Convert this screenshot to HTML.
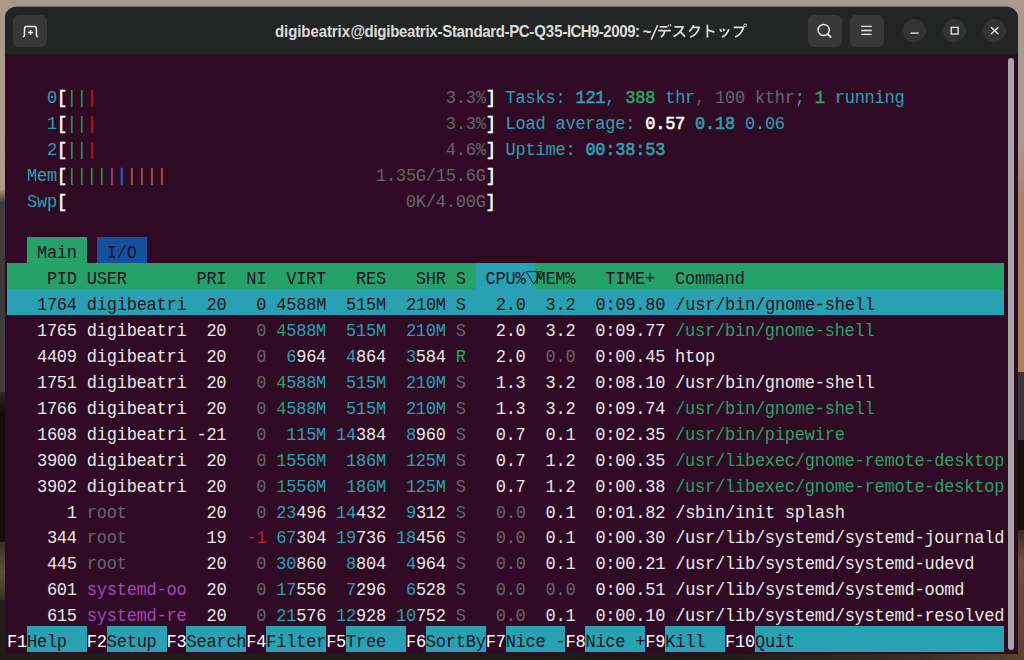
<!DOCTYPE html>
<html><head><meta charset="utf-8">
<style>
html,body{margin:0;padding:0}
body{width:1024px;height:660px;overflow:hidden;position:relative;background:#a89a8e}
.o{position:absolute}
.win{position:absolute;left:5px;top:7px;width:1013px;height:647px;border-radius:12px 12px 0 0;background:#300a24;overflow:hidden;box-shadow:0 0 0 0.6px rgba(0,0,0,0.6)}
.tb{position:absolute;left:0;top:0;width:1013px;height:48px;background:#232524;box-shadow:inset 0 -1px 0 #1b1a1b}
.btn{position:absolute;top:8px;width:33.5px;height:32px;border-radius:6px;background:#383838}
.cb{position:absolute;top:12.2px;width:23px;height:23px;border-radius:50%;background:#333333}
.title{position:absolute;top:17.3px;line-height:15px;font-family:"Liberation Sans",sans-serif;font-weight:bold;font-size:15px;color:#dcdcdc;white-space:pre;transform:scaleY(1.07);transform-origin:0 12.7px}
.sb{position:absolute;left:1003px;top:51px;width:6px;height:592px;border-radius:3px;background:#a6a6a6}
.b{position:absolute}
.t{position:absolute;left:7.0px;height:25.92px;line-height:25.92px;padding-top:4.1px;box-sizing:border-box;white-space:pre;
 font-family:"Liberation Mono",monospace;font-size:17.0px;letter-spacing:-0.2317px;color:#e8e8e8;transform:scaleY(1.06);transform-origin:0 21.58px}
.B{-webkit-text-stroke:0.55px currentColor}
</style></head><body>
<div class="win">
 <div class="tb">
  <div class="btn" style="left:8px"><svg width="34" height="32" viewBox="0 0 34 32"><path d="M9.8 21.5 H10.3 Q11.5 21.5 11.5 20.3 V13.5 Q11.5 11.5 13.5 11.5 H21.4 Q23.4 11.5 23.4 13.5 V20.3 Q23.4 21.5 24.6 21.5 H25.1" fill="none" stroke="#ececec" stroke-width="1.5"/><path d="M17.5 15 V20 M15 17.5 H20" stroke="#ececec" stroke-width="1.5"/></svg></div>
  <div class="title" style="left:270.00px;letter-spacing:-0.08px">digibeatrix</div><div class="title" style="left:345.40px;letter-spacing:-0.04px">@</div><div class="title" style="left:359.60px;letter-spacing:-0.28px">digibeatrix</div><div class="title" style="left:432.55px;letter-spacing:-0.33px">-Standard</div><div class="title" style="left:499.55px;letter-spacing:-0.41px">-PC</div><div class="title" style="left:524.15px;letter-spacing:0.0px">-Q35</div><div class="title" style="left:557.55px;letter-spacing:-0.59px">-ICH9</div><div class="title" style="left:593.75px;letter-spacing:-0.4px">-2009:</div><div class="title" style="left:637.8px">~</div>
  <div class="btn" style="left:803px"><svg width="34" height="32" viewBox="0 0 34 32"><circle cx="15.7" cy="15" r="5.6" fill="none" stroke="#e6e6e6" stroke-width="1.5"/><path d="M19.8 19.2 L22.6 22" stroke="#e6e6e6" stroke-width="1.9" stroke-linecap="round"/></svg></div>
  <div class="btn" style="left:845px"><svg width="34" height="32" viewBox="0 0 34 32"><path d="M11.7 11.4 H21.3 M11.7 15.5 H21.3 M11.7 19.3 H21.3" stroke="#e6e6e6" stroke-width="1.3" stroke-linecap="round"/></svg></div>
  <div class="cb" style="left:897.5px"><svg width="23" height="23" viewBox="0 0 23 23"><path d="M7.6 14.2 H15.8" stroke="#f0f0f0" stroke-width="1.3"/></svg></div>
  <div class="cb" style="left:937.5px"><svg width="23" height="23" viewBox="0 0 23 23"><rect x="8.2" y="8.4" width="6.9" height="6.6" fill="none" stroke="#f0f0f0" stroke-width="1.3"/></svg></div>
  <div class="cb" style="left:977.5px"><svg width="23" height="23" viewBox="0 0 23 23"><path d="M8 8.3 L15.3 15 M15.3 8.3 L8 15" stroke="#f0f0f0" stroke-width="1.4"/></svg></div>
 </div>
 <div class="sb"></div>
</div>
<div class="o" style="left:0;top:0;width:5px;height:190px;background:linear-gradient(180deg,#a89a8e,#b09c86)"></div>
<div class="o" style="left:0;top:190px;width:5px;height:12px;background:linear-gradient(180deg,#a08e7c,#444140)"></div>
<div class="o" style="left:0;top:202px;width:5px;height:190px;background:#3c3c3c"></div>
<div class="o" style="left:0;top:392px;width:5px;height:150px;background:linear-gradient(180deg,#2a2826,#100d0b 20px)"></div>
<div class="o" style="left:0;top:542px;width:5px;height:58px;background:linear-gradient(180deg,#3a3228,#5a4e3e 30px,#3a3228)"></div>
<div class="o" style="left:0;top:600px;width:5px;height:60px;background:#201d1b"></div>
<div class="o" style="left:1018px;top:0;width:6px;height:140px;background:#a89a8e"></div>
<div class="o" style="left:1018px;top:140px;width:6px;height:232px;background:linear-gradient(180deg,#a89a8e,#a8846a 60px,#b07e5a)"></div>
<div class="o" style="left:1018px;top:372px;width:6px;height:68px;background:#3a3836"></div>
<div class="o" style="left:1018px;top:440px;width:6px;height:90px;background:#14100c"></div>
<div class="o" style="left:1018px;top:530px;width:6px;height:130px;background:linear-gradient(180deg,#3a2c20,#6a5038 30px,#5a4230)"></div>
<div class="o" style="left:0;top:654px;width:1024px;height:6px;background:linear-gradient(90deg,#1f1c1a,#1c1a18 70%,#3a2e24 90%,#5a4230)"></div>
<svg class="o" style="left:650px;top:20px" width="100" height="22" viewBox="650 20 100 22" fill="none" stroke="#dedede" stroke-width="1.75" stroke-linecap="butt" stroke-linejoin="round">
<path d="M651.2 39.6 L657.6 25.2" stroke-width="1.6"/>
<path d="M659.6 26.8 H667.4 M658.2 30.6 H670.8 M664.6 30.6 Q664.6 35 660.8 37"/>
<path d="M668.1 24.6 L668.9 26.6 M670.2 24.2 L671 26.2" stroke-width="1.1"/>
<path d="M674.4 26.8 H683.1 Q680.5 33 673.6 36.6 M680.2 31.6 L685 36.6"/>
<path d="M693.8 25.2 Q692 29.2 689.2 31.6 M692.4 27.4 H699.2 Q697.5 34.5 690.2 37.2"/>
<path d="M707.4 24.8 V37.4 M708.2 30.2 L714.4 32.2"/>
<path d="M720 29.2 L721.4 31.8 M723.3 28.6 L724.4 31.2 M728.8 29.2 Q727 35 722 37"/>
<path d="M733.6 27.3 H743.6 Q741.5 34.5 735.2 37"/>
<circle cx="745.2" cy="25.3" r="1.3" stroke-width="1"/>
</svg>
<div class="b" style="left:26.94px;top:237.34px;width:59.82px;height:25.92px;background:#26a269"></div>
<div class="b" style="left:96.73px;top:237.34px;width:49.85px;height:25.92px;background:#1450a0"></div>
<div class="b" style="left:7.00px;top:263.26px;width:468.59px;height:25.92px;background:#26a269"></div>
<div class="b" style="left:475.59px;top:263.26px;width:59.82px;height:25.92px;background:#2aa1b3"></div>
<div class="b" style="left:535.41px;top:263.26px;width:468.59px;height:25.92px;background:#26a269"></div>
<div class="b" style="left:7.00px;top:289.18px;width:997.00px;height:25.92px;background:#2aa1b3"></div>
<div class="b" style="left:26.94px;top:626.14px;width:59.82px;height:25.92px;background:#2aa1b3"></div>
<div class="b" style="left:106.70px;top:626.14px;width:59.82px;height:25.92px;background:#2aa1b3"></div>
<div class="b" style="left:186.46px;top:626.14px;width:59.82px;height:25.92px;background:#2aa1b3"></div>
<div class="b" style="left:266.22px;top:626.14px;width:59.82px;height:25.92px;background:#2aa1b3"></div>
<div class="b" style="left:345.98px;top:626.14px;width:59.82px;height:25.92px;background:#2aa1b3"></div>
<div class="b" style="left:425.74px;top:626.14px;width:59.82px;height:25.92px;background:#2aa1b3"></div>
<div class="b" style="left:505.50px;top:626.14px;width:59.82px;height:25.92px;background:#2aa1b3"></div>
<div class="b" style="left:585.26px;top:626.14px;width:59.82px;height:25.92px;background:#2aa1b3"></div>
<div class="b" style="left:665.02px;top:626.14px;width:59.82px;height:25.92px;background:#2aa1b3"></div>
<div class="b" style="left:754.75px;top:626.14px;width:249.25px;height:25.92px;background:#2aa1b3"></div>
<div class="t" style="top:81.82px">    <span style="color:#2aa1b3">0</span><span class="B" style="color:#ffffff">[</span><span style="color:#26a269">||</span><span style="color:#c01c28">|</span>                                   <span style="color:#67656c">3.3%</span><span class="B" style="color:#ffffff">]</span> <span style="color:#2aa1b3">Tasks: </span><span class="B" style="color:#2aa1b3">121</span><span style="color:#2aa1b3">, </span><span class="B" style="color:#26a269">388</span><span style="color:#2aa1b3"> thr</span><span style="color:#67656c">, 100 kthr</span><span style="color:#2aa1b3">; </span><span class="B" style="color:#26a269">1</span><span style="color:#2aa1b3"> running</span></div>
<div class="t" style="top:107.74px">    <span style="color:#2aa1b3">1</span><span class="B" style="color:#ffffff">[</span><span style="color:#26a269">||</span><span style="color:#c01c28">|</span>                                   <span style="color:#67656c">3.3%</span><span class="B" style="color:#ffffff">]</span> <span style="color:#2aa1b3">Load average: </span><span class="B" style="color:#ffffff">0.57</span> <span class="B" style="color:#2aa1b3">0.18</span><span style="color:#2aa1b3"> 0.06</span></div>
<div class="t" style="top:133.66px">    <span style="color:#2aa1b3">2</span><span class="B" style="color:#ffffff">[</span><span style="color:#26a269">||</span><span style="color:#c01c28">|</span>                                   <span style="color:#67656c">4.6%</span><span class="B" style="color:#ffffff">]</span> <span style="color:#2aa1b3">Uptime: </span><span class="B" style="color:#2aa1b3">00:38:53</span></div>
<div class="t" style="top:159.58px">  <span style="color:#2aa1b3">Mem</span><span class="B" style="color:#ffffff">[</span><span style="color:#26a269">||||</span><span style="color:#a347ba">|</span><span class="B" style="color:#1f60b0">|</span><span style="color:#a2734c">||||</span>                     <span style="color:#67656c">1.35G/15.6G</span><span class="B" style="color:#ffffff">]</span></div>
<div class="t" style="top:185.50px">  <span style="color:#2aa1b3">Swp</span><span class="B" style="color:#ffffff">[</span>                                  <span style="color:#67656c">0K/4.00G</span><span class="B" style="color:#ffffff">]</span></div>
<div class="t" style="top:237.34px">  <span style="color:#171421"> Main </span> <span style="color:#171421"> I/O </span></div>
<div class="t" style="top:263.26px"><span style="color:#171421">    PID USER       PRI  NI  VIRT   RES   SHR S  CPU% MEM%   TIME+  Command</span></div>
<div class="t" style="top:289.18px">   <span style="color:#171421">1764</span> <span style="color:#171421">digibeatri</span>  <span style="color:#171421">20</span>   <span style="color:#171421">0</span> <span style="color:#171421">4588M</span>  <span style="color:#171421">515M</span>  <span style="color:#171421">210M</span> <span style="color:#171421">S</span>   <span style="color:#171421">2.0</span>  <span style="color:#171421">3.2</span>  <span style="color:#171421">0:09.80</span> <span style="color:#171421">/usr/bin/gnome-shell</span></div>
<div class="t" style="top:315.10px"><span style="color:#e8e8e8">   1765 digibeatri  20   </span><span style="color:#67656c">0</span> <span style="color:#26a269">4</span><span style="color:#2aa1b3">588M</span>  <span style="color:#2aa1b3">515M</span>  <span style="color:#2aa1b3">210M</span> <span style="color:#67656c">S</span><span style="color:#e8e8e8">   2.0  3.2  0:09.77 </span><span style="color:#26a269">/usr/bin/gnome-shell</span></div>
<div class="t" style="top:341.02px"><span style="color:#e8e8e8">   4409 digibeatri  20   </span><span style="color:#67656c">0</span>  <span style="color:#2aa1b3">6</span><span style="color:#e8e8e8">964  </span><span style="color:#2aa1b3">4</span><span style="color:#e8e8e8">864  </span><span style="color:#2aa1b3">3</span><span style="color:#e8e8e8">584 </span><span style="color:#26a269">R</span><span style="color:#e8e8e8">   2.0  </span><span style="color:#67656c">0.0</span><span style="color:#e8e8e8">  0:00.45 htop                             </span></div>
<div class="t" style="top:366.94px"><span style="color:#e8e8e8">   1751 digibeatri  20   </span><span style="color:#67656c">0</span> <span style="color:#26a269">4</span><span style="color:#2aa1b3">588M</span>  <span style="color:#2aa1b3">515M</span>  <span style="color:#2aa1b3">210M</span> <span style="color:#67656c">S</span><span style="color:#e8e8e8">   1.3  3.2  0:08.10 /usr/bin/gnome-shell             </span></div>
<div class="t" style="top:392.86px"><span style="color:#e8e8e8">   1766 digibeatri  20   </span><span style="color:#67656c">0</span> <span style="color:#26a269">4</span><span style="color:#2aa1b3">588M</span>  <span style="color:#2aa1b3">515M</span>  <span style="color:#2aa1b3">210M</span> <span style="color:#67656c">S</span><span style="color:#e8e8e8">   1.3  3.2  0:09.74 </span><span style="color:#26a269">/usr/bin/gnome-shell</span></div>
<div class="t" style="top:418.78px"><span style="color:#e8e8e8">   1608 digibeatri -21   </span><span style="color:#67656c">0</span>  <span style="color:#2aa1b3">115M</span> <span style="color:#2aa1b3">14</span><span style="color:#e8e8e8">384  </span><span style="color:#2aa1b3">8</span><span style="color:#e8e8e8">960 </span><span style="color:#67656c">S</span><span style="color:#e8e8e8">   0.7  0.1  0:02.35 </span><span style="color:#26a269">/usr/bin/pipewire</span></div>
<div class="t" style="top:444.70px"><span style="color:#e8e8e8">   3900 digibeatri  20   </span><span style="color:#67656c">0</span> <span style="color:#26a269">1</span><span style="color:#2aa1b3">556M</span>  <span style="color:#2aa1b3">186M</span>  <span style="color:#2aa1b3">125M</span> <span style="color:#67656c">S</span><span style="color:#e8e8e8">   0.7  1.2  0:00.35 </span><span style="color:#26a269">/usr/libexec/gnome-remote-desktop</span></div>
<div class="t" style="top:470.62px"><span style="color:#e8e8e8">   3902 digibeatri  20   </span><span style="color:#67656c">0</span> <span style="color:#26a269">1</span><span style="color:#2aa1b3">556M</span>  <span style="color:#2aa1b3">186M</span>  <span style="color:#2aa1b3">125M</span> <span style="color:#67656c">S</span><span style="color:#e8e8e8">   0.7  1.2  0:00.38 </span><span style="color:#26a269">/usr/libexec/gnome-remote-desktop</span></div>
<div class="t" style="top:496.54px"><span style="color:#e8e8e8">      1 </span><span style="color:#67656c">root</span><span style="color:#e8e8e8">        20   </span><span style="color:#67656c">0</span> <span style="color:#2aa1b3">23</span><span style="color:#e8e8e8">496 </span><span style="color:#2aa1b3">14</span><span style="color:#e8e8e8">432  </span><span style="color:#2aa1b3">9</span><span style="color:#e8e8e8">312 </span><span style="color:#67656c">S</span>   <span style="color:#67656c">0.0</span><span style="color:#e8e8e8">  0.1  0:01.82 /sbin/init splash                </span></div>
<div class="t" style="top:522.46px"><span style="color:#e8e8e8">    344 </span><span style="color:#67656c">root</span><span style="color:#e8e8e8">        19  </span><span style="color:#c01c28">-1</span> <span style="color:#2aa1b3">67</span><span style="color:#e8e8e8">304 </span><span style="color:#2aa1b3">19</span><span style="color:#e8e8e8">736 </span><span style="color:#2aa1b3">18</span><span style="color:#e8e8e8">456 </span><span style="color:#67656c">S</span>   <span style="color:#67656c">0.0</span><span style="color:#e8e8e8">  0.1  0:00.30 /usr/lib/systemd/systemd-journald</span></div>
<div class="t" style="top:548.38px"><span style="color:#e8e8e8">    445 </span><span style="color:#67656c">root</span><span style="color:#e8e8e8">        20   </span><span style="color:#67656c">0</span> <span style="color:#2aa1b3">30</span><span style="color:#e8e8e8">860  </span><span style="color:#2aa1b3">8</span><span style="color:#e8e8e8">804  </span><span style="color:#2aa1b3">4</span><span style="color:#e8e8e8">964 </span><span style="color:#67656c">S</span>   <span style="color:#67656c">0.0</span><span style="color:#e8e8e8">  0.1  0:00.21 /usr/lib/systemd/systemd-udevd   </span></div>
<div class="t" style="top:574.30px"><span style="color:#e8e8e8">    601 </span><span style="color:#a347ba">systemd-oo</span><span style="color:#e8e8e8">  20   </span><span style="color:#67656c">0</span> <span style="color:#2aa1b3">17</span><span style="color:#e8e8e8">556  </span><span style="color:#2aa1b3">7</span><span style="color:#e8e8e8">296  </span><span style="color:#2aa1b3">6</span><span style="color:#e8e8e8">528 </span><span style="color:#67656c">S</span>   <span style="color:#67656c">0.0</span>  <span style="color:#67656c">0.0</span><span style="color:#e8e8e8">  0:00.51 /usr/lib/systemd/systemd-oomd    </span></div>
<div class="t" style="top:600.22px"><span style="color:#e8e8e8">    615 </span><span style="color:#a347ba">systemd-re</span><span style="color:#e8e8e8">  20   </span><span style="color:#67656c">0</span> <span style="color:#2aa1b3">21</span><span style="color:#e8e8e8">576 </span><span style="color:#2aa1b3">12</span><span style="color:#e8e8e8">928 </span><span style="color:#2aa1b3">10</span><span style="color:#e8e8e8">752 </span><span style="color:#67656c">S</span>   <span style="color:#67656c">0.0</span><span style="color:#e8e8e8">  0.1  0:00.10 /usr/lib/systemd/systemd-resolved</span></div>
<div class="t" style="top:626.14px"><span style="color:#ffffff">F1</span><span style="color:#171421">Help  </span><span style="color:#ffffff">F2</span><span style="color:#171421">Setup </span><span style="color:#ffffff">F3</span><span style="color:#171421">Search</span><span style="color:#ffffff">F4</span><span style="color:#171421">Filter</span><span style="color:#ffffff">F5</span><span style="color:#171421">Tree  </span><span style="color:#ffffff">F6</span><span style="color:#171421">SortBy</span><span style="color:#ffffff">F7</span><span style="color:#171421">Nice -</span><span style="color:#ffffff">F8</span><span style="color:#171421">Nice +</span><span style="color:#ffffff">F9</span><span style="color:#171421">Kill  </span><span style="color:#ffffff">F10</span><span style="color:#171421">Quit</span></div>
<svg class="o" style="left:520px;top:265px" width="30" height="25" viewBox="520 265 30 25"><path d="M526.3 271.6 H541.6 L533.9 284.2 Z" fill="none" stroke="#171421" stroke-width="0.95" stroke-linejoin="miter"/></svg>
</body></html>
